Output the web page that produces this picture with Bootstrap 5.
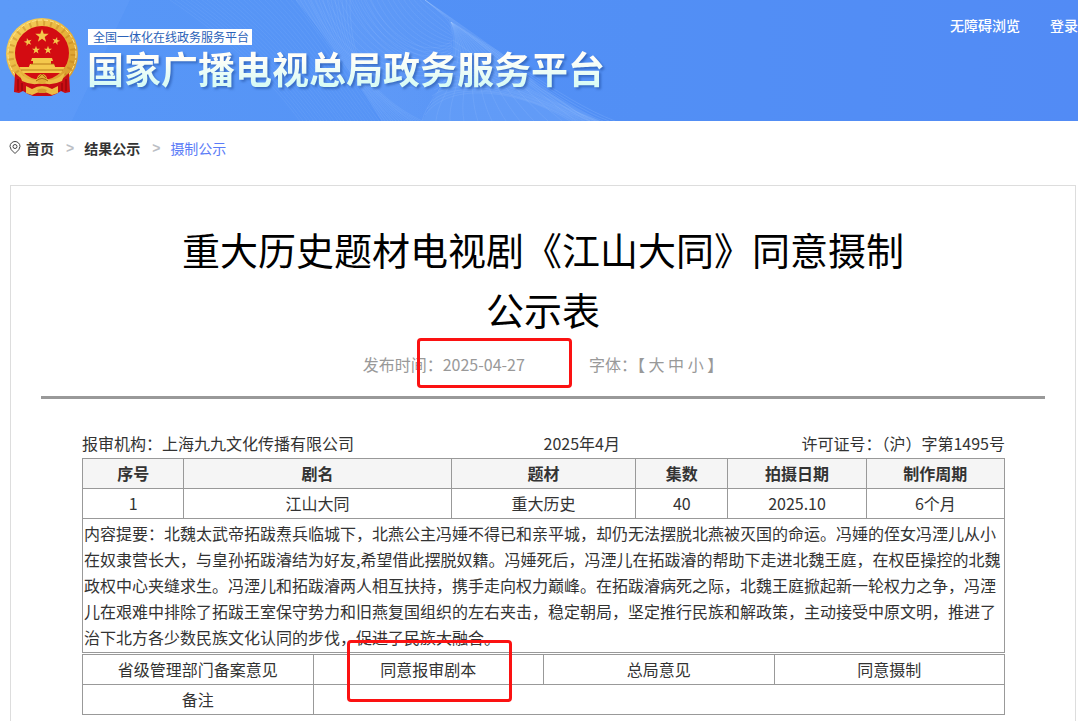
<!DOCTYPE html>
<html lang="zh-CN">
<head>
<meta charset="utf-8">
<meta name="viewport" content="width=device-width, initial-scale=1">
<title>国家广播电视总局政务服务平台</title>
<link href="https://cdn.jsdelivr.net/npm/bootstrap@5.3.0/dist/css/bootstrap.min.css" rel="stylesheet">
<style>
body { font-family: "Noto Sans CJK SC", sans-serif; font-size: 16px; line-height: 26px; color: #333; }
a { text-decoration: none; color: inherit; }
.site-header { height: 121px; background: linear-gradient(90deg, #5394f7, #528ff5 60%, #528bf5); }
.header-waves { position: absolute; left: 0; top: 0; width: 1078px; height: 121px; }
.header-waves path { fill: none; stroke: #b5d2ff; stroke-width: 1; }
.emblem { width: 74px; height: 80px; margin: 17px 8px 0 5px; flex: none; }
.brand-tag { background: #fff; color: #2b62b8; font-size: 12px; line-height: 16px; padding: 0 2px 0 5px; margin: 29px 0 0 1px; width: 164px; white-space: nowrap; }
.brand-name { font-size: 37px; line-height: 46px; font-weight: 700; margin: 0; white-space: nowrap; color: transparent; background: linear-gradient(#fffef8 30%, #d9fbf5 85%); -webkit-background-clip: text; background-clip: text; filter: drop-shadow(2px 2px 1px rgba(25, 70, 150, .5)); }
.user-links { gap: 30px; padding-top: 15px; font-size: 14px; line-height: 20px; font-weight: 500; color: #fff; }
.crumbs { height: 64px; padding: 17px 9px 0; font-size: 14px; line-height: 20px; font-weight: 700; }
.crumbs ol { margin: 0; }
.crumbs svg { margin-right: 5px; }
.crumbs .breadcrumb-item + .breadcrumb-item { padding-left: 10px; }
.crumbs .breadcrumb-item + .breadcrumb-item::before { content: ">"; font-family: "Liberation Sans", sans-serif; font-weight: 700; color: #bbbec4; padding: 0 10px 0 2px; }
.crumbs .active { color: #5b7cf7; font-weight: 400; }
.notice { border: 1px solid #ddd; margin: 0 2px 0 10px; padding: 33px 30px 40px; }
.notice-title { font-size: 38px; line-height: 60px; font-weight: 400; color: #000; padding: 0 132px; margin: 0; text-align: center; }
.notice-meta { color: #999; gap: 64px; line-height: 24px; padding: 13px 0 20px; border-bottom: 3px solid #999; }
.notice-meta button { border: 0; padding: 0; background: none; color: inherit; }
.sheet { padding: 31px 40px 0 41px; }
.sheet-head { line-height: 27px; padding-bottom: 1px; }
.sheet table { width: 100%; table-layout: fixed; border-collapse: collapse; margin: 0; }
.sheet th, .sheet td { border: 1px solid #999; height: 30px; padding: 0 1px 2px; text-align: center; }
.sheet th { background: #f5f5f5; }
.sheet td.summary { text-align: left; padding: 1px 1px 2px; }
.sheet .table-gap { margin-top: 1px; }
.mark-box { position: absolute; border: 3px solid #fb1212; border-radius: 4px; pointer-events: none; }
.mark-date { left: -26px; top: -14px; width: 155px; height: 50px; }
.mark-opinion { left: 33px; top: -15px; width: 165px; height: 62px; z-index: 1; }
</style>
</head>
<body>
<header class="site-header position-relative overflow-hidden d-flex">
  <svg class="header-waves" viewBox="0 0 1078 121" aria-hidden="true">
    <defs>
      <linearGradient id="fold" x1="0" x2="1"><stop offset="0" stop-color="#8cbaff" stop-opacity=".25"/><stop offset="1" stop-color="#9fc6ff" stop-opacity=".1"/></linearGradient>
    </defs>
    <polygon points="130,0 72,121 0,121 0,0" fill="#8fbaff" opacity=".16"/>
    <polygon points="130,0 72,121 380,121 340,60 296,0" fill="#74a9fb" opacity=".14"/>
    <path d="M296 0C325 36 350 70 382 121H422L440 86Q460 48 450 20L425 0Z" style="fill:url(#fold);stroke:none"/>
    <path d="M449 20 500 52 540 87Q570 106 600 121H422L441 85Q460 50 449 20Z" style="fill:#9fc6ff;stroke:none" opacity=".2"/>
    <g id="waves"></g>
  </svg>
  <svg class="emblem position-relative" viewBox="0 0 74 80" role="img" aria-label="国徽">
    <defs><linearGradient id="gold" x2="1" y2="1"><stop stop-color="#f9d867"/><stop offset=".5" stop-color="#e8b33b"/><stop offset="1" stop-color="#d39428"/></linearGradient>
    <path id="star" d="M0-7 1.7-2.2 6.7-2.2 2.7.9 4.1 5.7 0 2.8-4.1 5.7-2.7.9-6.7-2.2-1.7-2.2Z"/></defs>
    <circle cx="37" cy="37" r="36" fill="url(#gold)"/>
    <circle cx="37" cy="37" r="31" fill="none" stroke="#b87917" stroke-width="5" stroke-dasharray="2 5" opacity=".4"/>
    <circle cx="37" cy="37" r="34" fill="none" stroke="#ffe58c" stroke-width="1" stroke-dasharray="4 2"/>
    <circle cx="37" cy="36" r="27" fill="#d30c12"/>
    <g fill="#f4c84c"><use href="#star" x="37" y="19"/><use href="#star" transform="translate(23 25)scale(.6)rotate(-15)"/><use href="#star" transform="translate(51 24)scale(.6)rotate(15)"/><use href="#star" transform="translate(31 33)scale(.6)"/><use href="#star" transform="translate(43 33)scale(.6)"/>
    <path d="M27 41h20l1 3h-2v3h3l2 5H23l2-5h3v-3h-2Z"/><path d="M14 50h46l-4 6H18Z"/></g>
    <path d="M26 47h23M16 53h42" stroke="#a9670c" stroke-width=".8"/>
    <path d="M10 56 9 75l5 1 4-2 5 3 5 2h18l5-2 5-3 4 2 5-1-1-19-9 8-18 3-18-3Z" fill="#c90d13"/>
    <path d="M14 55q9 9 16 8l7-5 7 5q7 1 16-8l-3 9q-10 5-20 2-10 3-20-2Z" fill="#edbd47"/>
    <circle cx="37" cy="62" r="5" fill="#e1ab35"/>
    <path d="M31 64q6-5 12 0M33 61l4-4 4 4" fill="none" stroke="#a9670c"/>
    <path d="M21 69l6 3q10-6 20 0l6-3v7l-6 2q-10-6-20 0l-6-2Z" fill="#edbc43"/>
    <path d="M32 73q5-3 10 0l-2 3h-6Z" fill="#d99a2a"/>
    <path d="M13 62v12M17 66v8M57 66v8M61 62v12" stroke="#860409"/>
  </svg>
  <div class="position-relative flex-grow-1">
    <div class="brand-tag">全国一体化在线政务服务平台</div>
    <h1 class="brand-name d-inline-block">国家广播电视总局政务服务平台</h1>
  </div>
  <nav class="user-links position-relative d-flex text-nowrap align-items-start"><a href="#">无障碍浏览</a><a href="#">登录</a></nav>
</header>

<nav class="crumbs" aria-label="breadcrumb">
  <ol class="breadcrumb">
    <li class="breadcrumb-item d-flex align-items-center"><svg width="12" height="14" viewBox="0 0 12 14" fill="none" stroke="#444" aria-hidden="true"><path d="M6 12.500Q1 8.500 1 5.500a5 5 0 0 1 10 0Q11 8.500 6 12.500Z"/><circle cx="6" cy="5.500" r="2"/></svg><a href="#">首页</a></li>
    <li class="breadcrumb-item"><a href="#">结果公示</a></li>
    <li class="breadcrumb-item active" aria-current="page">摄制公示</li>
  </ol>
</nav>

<main class="notice">
  <h2 class="notice-title">重大历史题材电视剧《江山大同》同意摄制公示表</h2>
  <div class="notice-meta d-flex justify-content-center">
    <div>发布时间：<span class="position-relative">2025-04-27<span class="mark-box mark-date"></span></span></div>
    <div>字体：【 <button type="button">大</button> <button type="button">中</button> <button type="button">小</button> 】</div>
  </div>
  <div class="sheet">
    <div class="sheet-head row g-0">
      <div class="col-6">报审机构：上海九九文化传播有限公司</div>
      <div class="col-2">2025年4月</div>
      <div class="col-4 text-end">许可证号：（沪）字第1495号</div>
    </div>
    <table>
      <colgroup><col style="width:11%"><col style="width:29%"><col style="width:20%"><col style="width:10%"><col style="width:15%"><col style="width:15%"></colgroup>
      <thead><tr><th>序号</th><th>剧名</th><th>题材</th><th>集数</th><th>拍摄日期</th><th>制作周期</th></tr></thead>
      <tbody>
        <tr><td>1</td><td>江山大同</td><td>重大历史</td><td>40</td><td>2025.10</td><td>6个月</td></tr>
        <tr><td colspan="6" class="summary">内容提要：北魏太武帝拓跋焘兵临城下，北燕公主冯娷不得已和亲平城，却仍无法摆脱北燕被灭国的命运。冯娷的侄女冯湮儿从小在奴隶营长大，与皇孙拓跋濬结为好友,希望借此摆脱奴籍。冯娷死后，冯湮儿在拓跋濬的帮助下走进北魏王庭，在权臣操控的北魏政权中心夹缝求生。冯湮儿和拓跋濬两人相互扶持，携手走向权力巅峰。在拓跋濬病死之际，北魏王庭掀起新一轮权力之争，冯湮儿在艰难中排除了拓跋王室保守势力和旧燕复国组织的左右夹击，稳定朝局，坚定推行民族和解政策，主动接受中原文明，推进了治下北方各少数民族文化认同的步伐，促进了民族大融合。</td></tr>
      </tbody>
    </table>
    <table class="table-gap">
      <tbody>
        <tr><td>省级管理部门备案意见</td><td class="position-relative">同意报审剧本<span class="mark-box mark-opinion"></span></td><td>总局意见</td><td>同意摄制</td></tr>
        <tr><td>备注</td><td colspan="3"></td></tr>
      </tbody>
    </table>
  </div>
</main>
<script>
// Fine mesh of the header: each family blends evenly from one curve to another.
const families = [
  { from: [170,0,230,40,270,80,300,121], to: [296,0,330,40,350,80,382,121], n: 24, o: .09 },
  { from: [296,0,330,50,350,70,382,121], to: [350,0,350,50,360,90,422,121], n: 14, o: .12 },
  { from: [350,0,380,70,440,80,452,60], to: [425,0,440,12,450,20,452,30], n: 14, o: .11 },
  { from: [310,0,330,50,400,110,445,80], to: [370,0,390,40,430,60,453,40], n: 10, o: .11 },
  { from: [451,22,470,70,430,90,422,121], to: [451,22,500,54,540,88,590,121], n: 12, o: .13 },
  { from: [453,40,480,60,540,100,600,121], to: [425,115,450,80,520,90,570,121], n: 12, o: .13 },
  { from: [425,0,480,44,560,110,590,121], to: [425,0,490,44,560,100,615,121], n: 4, o: .16 }
];
let markup = "";
for (const f of families) {
  for (let i = 0; i <= f.n; i++) {
    const p = f.from.map((v, k) => Math.round(v + (f.to[k] - v) * i / f.n));
    markup += `<path opacity="${f.o}" d="M${p[0]} ${p[1]}C${p.slice(2).join(" ")}"/>`;
  }
}
document.getElementById("waves").innerHTML = markup;
</script>
<script src="https://cdn.jsdelivr.net/npm/bootstrap@5.3.0/dist/js/bootstrap.bundle.min.js"></script>
</body>
</html>
